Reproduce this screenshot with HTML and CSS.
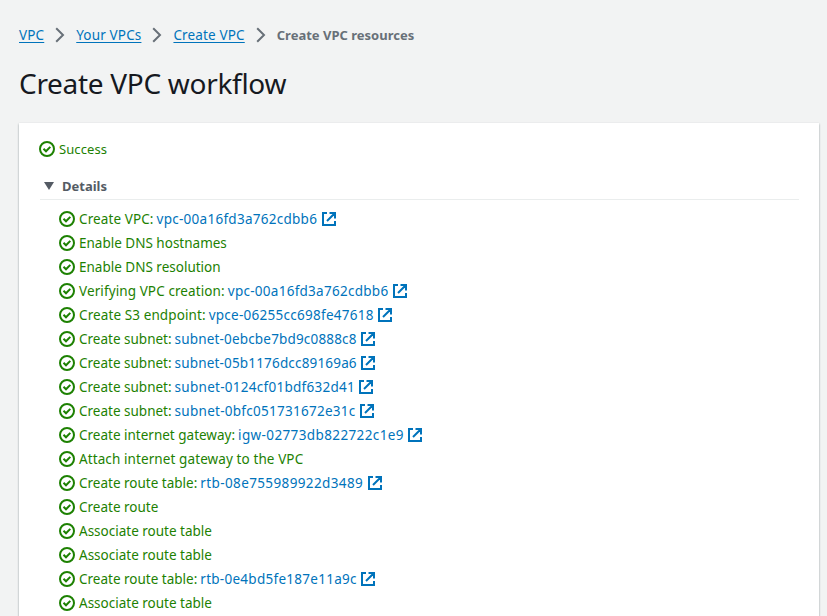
FILE: index.html
```html
<!DOCTYPE html>
<html lang="en">
<head>
<meta charset="utf-8">
<title>Create VPC workflow</title>
<link rel="stylesheet" href="styles.css">
</head>
<body>
<svg class="sprite" aria-hidden="true">
  <symbol id="check" viewBox="0 0 16 16"><circle cx="8" cy="8" r="7"/><path d="M4.500 7.800l2.500 2.500 4.300-4.400"/></symbol>
  <symbol id="external" viewBox="0 0 14 14"><path d="M5 1H1v12h12V9M7.500 1H13v5.500M12.500 1.500L5 9"/></symbol>
  <symbol id="chevron" viewBox="0 0 10 16"><path d="M1.200 1.200L8 8l-6.800 6.800"/></symbol>
</svg>
<nav class="breadcrumbs">
  <a href="#">VPC</a><svg class="chevron"><use href="#chevron"/></svg>
  <a href="#">Your VPCs</a><svg class="chevron"><use href="#chevron"/></svg>
  <a href="#">Create VPC</a><svg class="chevron"><use href="#chevron"/></svg>
  <span class="current">Create VPC resources</span>
</nav>
<h1>Create VPC workflow</h1>
<main class="card">
  <div class="status"><svg class="check"><use href="#check"/></svg><span class="success">Success</span></div>
  <div class="details"><span class="caret"></span>Details</div>
  <ul class="steps">
    <li><svg class="check"><use href="#check"/></svg><span class="wide">Create VPC:</span><a href="#">vpc-00a16fd3a762cdbb6</a><svg class="external"><use href="#external"/></svg></li>
    <li><svg class="check"><use href="#check"/></svg><span>Enable DNS hostnames</span></li>
    <li><svg class="check"><use href="#check"/></svg><span>Enable DNS resolution</span></li>
    <li><svg class="check"><use href="#check"/></svg><span class="wide">Verifying VPC creation:</span><a href="#">vpc-00a16fd3a762cdbb6</a><svg class="external"><use href="#external"/></svg></li>
    <li><svg class="check"><use href="#check"/></svg><span class="wide">Create S3 endpoint:</span><a href="#">vpce-06255cc698fe47618</a><svg class="external"><use href="#external"/></svg></li>
    <li><svg class="check"><use href="#check"/></svg><span>Create subnet:</span><a class="tight" href="#">subnet-0ebcbe7bd9c0888c8</a><svg class="external"><use href="#external"/></svg></li>
    <li><svg class="check"><use href="#check"/></svg><span>Create subnet:</span><a class="tight" href="#">subnet-05b1176dcc89169a6</a><svg class="external"><use href="#external"/></svg></li>
    <li><svg class="check"><use href="#check"/></svg><span>Create subnet:</span><a href="#">subnet-0124cf01bdf632d41</a><svg class="external"><use href="#external"/></svg></li>
    <li><svg class="check"><use href="#check"/></svg><span>Create subnet:</span><a href="#">subnet-0bfc051731672e31c</a><svg class="external"><use href="#external"/></svg></li>
    <li><svg class="check"><use href="#check"/></svg><span>Create internet gateway:</span><a class="loose" href="#">igw-02773db822722c1e9</a><svg class="external"><use href="#external"/></svg></li>
    <li><svg class="check"><use href="#check"/></svg><span class="wide">Attach internet gateway to the VPC</span></li>
    <li><svg class="check"><use href="#check"/></svg><span>Create route table:</span><a class="loose" href="#">rtb-08e755989922d3489</a><svg class="external"><use href="#external"/></svg></li>
    <li><svg class="check"><use href="#check"/></svg><span>Create route</span></li>
    <li><svg class="check"><use href="#check"/></svg><span>Associate route table</span></li>
    <li><svg class="check"><use href="#check"/></svg><span>Associate route table</span></li>
    <li><svg class="check"><use href="#check"/></svg><span>Create route table:</span><a href="#">rtb-0e4bd5fe187e11a9c</a><svg class="external"><use href="#external"/></svg></li>
    <li><svg class="check"><use href="#check"/></svg><span>Associate route table</span></li>
  </ul>
</main>
</body>
</html>
```
FILE: styles.css
```css
* { box-sizing: border-box; }
html, body { height: 100%; }
body {
  margin: 0;
  padding: 24px 8px 0 19px;
  overflow: hidden;
  background: #f2f3f3;
  font: 13.5px/22px "Noto Sans", sans-serif;
  color: #16191f;
}
a { color: #0073bb; text-decoration: none; }
svg { fill: none; flex: none; }
.sprite { display: none; }
.breadcrumbs { display: flex; align-items: center; height: 22px; white-space: nowrap; }
.breadcrumbs a { text-decoration: underline; text-underline-offset: 2px; letter-spacing: .15px; }
.chevron { width: 10px; height: 16px; margin: 0 11px; stroke: #687078; stroke-width: 2; }
.current { font-size: 13px; font-weight: 700; color: #687078; }
h1 { margin: 20px 0 0; height: 36px; font-size: 28px; line-height: 35px; font-weight: 400; letter-spacing: -.3px; }
.card {
  margin-top: 21px;
  height: 520px;
  padding: 15px 20px 0;
  background: #fff;
  box-shadow: 0 1px 2px rgba(0, 28, 36, .4);
}
.status, .steps li { display: flex; align-items: center; color: #1d8102; white-space: nowrap; }
.status { height: 22px; font-size: 13px; letter-spacing: .1px; }
.check { width: 16px; height: 16px; margin-right: 4px; stroke: #1d8102; stroke-width: 2; }
.details {
  display: flex; align-items: center;
  height: 28px; margin: 12px 0 0 1px;
  border-bottom: 1px solid #eaeded;
  font-size: 13px; font-weight: 700; color: #545b64;
}
.caret {
  margin: 0 8px 0 4px;
  border: 5px solid transparent; border-top: 8px solid #545b64; border-bottom: 0;
}
.steps { list-style: none; margin: 7px 0 0; padding: 0 0 0 20px; }
.steps li { height: 24px; }
.steps a { margin-left: 3px; letter-spacing: .27px; }
.steps .tight { letter-spacing: .17px; }
.steps .loose { letter-spacing: .38px; }
.wide { letter-spacing: .1px; }
.external { width: 14px; height: 14px; margin-left: 4.500px; stroke: #0073bb; stroke-width: 2; }
```
